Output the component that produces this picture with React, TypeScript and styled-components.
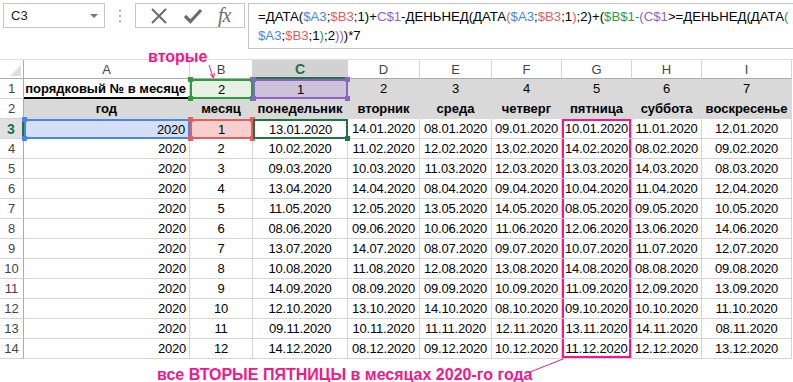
import React from 'react';
import styled, { createGlobalStyle } from 'styled-components';

const PINK = '#f5168a';
const GRID = '#d4d4d4';
const GREY_FILL = '#d9d9d9';

const GlobalStyle = createGlobalStyle`
    body {
        margin: 0;
        background: #fff;
        font-family: "Liberation Sans", Arial, sans-serif;
        overflow: hidden;
    }
`

/**
 * PAGE
 */

const Page = styled.div`
    position: relative;
    width: 793px;
    height: 382px;
    overflow: hidden;
    background: #fff;
`

/**
 * FORMULA BAR
 */

const FormulaBar = styled.div`
    display: flex;
    align-items: flex-start;
    height: 59px;
    padding: 3px 0 0 3px;
    box-sizing: border-box;
`

const NameBox = styled.div`
    width: 102px;
    height: 25px;
    box-sizing: border-box;
    border: 1px solid #c6c6c6;
    display: flex;
    align-items: center;
    justify-content: space-between;
    padding: 0 6px 0 7px;
    font-size: 13px;
    color: #222;
`

const DropArrow = styled.span`
    width: 0;
    height: 0;
    border-left: 4px solid transparent;
    border-right: 4px solid transparent;
    border-top: 4px solid #777;
`

const Grip = styled.div`
    width: 30px;
    height: 25px;
    display: flex;
    flex-direction: column;
    align-items: center;
    justify-content: center;
    gap: 3px;
    & span {
        width: 2px;
        height: 2px;
        background: #b5b5b5;
    }
`

const ButtonsBox = styled.div`
    width: 110px;
    height: 25px;
    box-sizing: border-box;
    border: 1px solid #c6c6c6;
    display: flex;
    align-items: center;
    justify-content: space-around;
    padding: 0 6px;
`

const FxLabel = styled.span`
    font-family: "Liberation Serif", "Times New Roman", serif;
    font-style: italic;
    font-size: 20px;
    color: #6e6e6e;
    letter-spacing: -1px;
`

const FormulaBox = styled.div`
    margin-left: 3px;
    flex: 1;
    height: 46px;
    box-sizing: border-box;
    border: 1px solid #c6c6c6;
    border-right: none;
    padding: 3px 0 0 9px;
    font-size: 13.2px;
    line-height: 19px;
    white-space: nowrap;
    color: #000;
`

const Tok = styled.span<{ $c: string }>`
    color: ${p => p.$c};
`

/**
 * SHEET
 */

const COLS = [24, 166, 63, 95, 72, 72, 70, 70, 70, 90];

const Sheet = styled.div`
    display: grid;
    grid-template-columns: ${COLS.map(c => c + 'px').join(' ')};
    grid-template-rows: 19px repeat(14, 20px);
    border-top: 1px solid #e1e1e1;
    font-size: 13px;
    color: #000;
`

const Corner = styled.div`
    position: relative;
    border-right: 1px solid #ababab;
    border-bottom: 1px solid #ababab;
    &:after {
        content: '';
        position: absolute;
        right: 2px;
        bottom: 2px;
        border-left: 11px solid transparent;
        border-bottom: 11px solid #dfdfdf;
    }
`

const ColHead = styled.div<{ $active?: boolean }>`
    box-sizing: border-box;
    display: flex;
    align-items: center;
    justify-content: center;
    background: ${p => p.$active ? '#d2d2d2' : '#fff'};
    border-right: 1px solid ${GRID};
    border-bottom: ${p => p.$active ? '2px solid #217346' : '1px solid #ababab'};
    color: ${p => p.$active ? '#217346' : '#444'};
    font-weight: ${p => p.$active ? 700 : 400};
    font-size: ${p => p.$active ? '14px' : '13px'};
`

const RowHead = styled.div<{ $active?: boolean }>`
    box-sizing: border-box;
    display: flex;
    align-items: center;
    justify-content: center;
    background: ${p => p.$active ? '#e1e1e1' : '#fff'};
    border-right: ${p => p.$active ? '2px solid #217346' : '1px solid #ababab'};
    border-bottom: 1px solid ${GRID};
    color: ${p => p.$active ? '#217346' : '#444'};
    font-weight: ${p => p.$active ? 700 : 400};
    font-size: ${p => p.$active ? '14px' : '13px'};
`

type Align = 'left' | 'center' | 'right';
type Frame = 'top' | 'mid' | 'bottom';

const justify = (a?: Align) => a === 'right' ? 'flex-end' : a === 'left' ? 'flex-start' : 'center';

const frameShadow = (f?: Frame) => {
    if (!f) return 'none';
    const sides = [`inset 2px 0 0 ${PINK}`, `inset -2px 0 0 ${PINK}`];
    if (f === 'top') sides.push(`inset 0 2px 0 ${PINK}`);
    if (f === 'bottom') sides.push(`inset 0 -2px 0 ${PINK}`);
    return sides.join(', ');
}

const Cell = styled.div<{ $align?: Align; $bold?: boolean; $fill?: string; $underline?: boolean; $frame?: Frame }>`
    box-sizing: border-box;
    display: flex;
    align-items: center;
    justify-content: ${p => justify(p.$align)};
    padding: 0 3px;
    white-space: nowrap;
    overflow: hidden;
    letter-spacing: ${p => p.$bold ? '0' : '-0.2px'};
    background: ${p => p.$fill || '#fff'};
    border-right: 1px solid ${p => p.$fill || GRID};
    border-bottom: ${p => p.$underline ? '2px solid #000' : `1px solid ${p.$fill || GRID}`};
    font-weight: ${p => p.$bold ? 700 : 400};
    box-shadow: ${p => frameShadow(p.$frame)};
`

const RefCell = styled.div<{ $color: string; $fill?: string; $align?: Align }>`
    position: relative;
    box-sizing: border-box;
    display: flex;
    align-items: center;
    justify-content: ${p => justify(p.$align)};
    padding: 0 3px;
    letter-spacing: -0.2px;
    background: ${p => p.$fill || '#fff'};
    border: 2px solid ${p => p.$color};
    z-index: 2;
`

const Handle = styled.span<{ $color: string; $pos: 'tl' | 'tr' | 'bl' | 'br' }>`
    position: absolute;
    width: 5px;
    height: 5px;
    background: ${p => p.$color};
    ${p => p.$pos[0] === 't' ? 'top: -4px;' : 'bottom: -4px;'}
    ${p => p.$pos[1] === 'l' ? 'left: -4px;' : 'right: -4px;'}
`

/**
 * ANNOTATIONS
 */

const Caption = styled.div`
    padding: 6px 0 0 157px;
    font-size: 16px;
    line-height: 20px;
    font-weight: 700;
    color: ${PINK};
    white-space: nowrap;
`

const Label = styled.div`
    position: absolute;
    left: 148px;
    top: 47px;
    font-size: 16px;
    line-height: 20px;
    font-weight: 700;
    color: ${PINK};
`

const Overlay = styled.svg`
    position: absolute;
    left: 0;
    top: 0;
    pointer-events: none;
    z-index: 5;
`

function Handles({ color, corners = ['tl', 'tr', 'bl', 'br'] }: { color: string; corners?: ('tl' | 'tr' | 'bl' | 'br')[] }) {
    return (
        <>
            {corners.map(c => <Handle key={c} $color={color} $pos={c} />)}
        </>
    )
}

const C_BLUE = '#4a86e8';
const C_RED = '#e06060';
const C_PURPLE = '#8e63c9';
const C_GREEN = '#2f9a44';

const DAYS = ['понедельник', 'вторник', 'среда', 'четверг', 'пятница', 'суббота', 'воскресенье'];
const LETTERS = ['A', 'B', 'C', 'D', 'E', 'F', 'G', 'H', 'I'];
const FRIDAY = 4;

// second occurrence of weekday (1 = Mon .. 7 = Sun) in a month of 2020
function secondWeekday(month: number, wd: number) {
    const d8 = new Date(2020, month - 1, 8).getDay() || 7;
    const day = 8 + ((wd - d8 + 7) % 7);
    const pad = (n: number) => (n < 10 ? '0' : '') + n;
    return `${pad(day)}.${pad(month)}.2020`;
}

function Formula() {
    return (
        <FormulaBox>
            <div>
                =ДАТА(<Tok $c={C_BLUE}>$A3</Tok>;<Tok $c={C_RED}>$B3</Tok>;1)+<Tok $c={C_PURPLE}>C$1</Tok>-ДЕНЬНЕД(ДАТА<Tok $c={C_RED}>(</Tok><Tok $c={C_BLUE}>$A3</Tok>;<Tok $c={C_RED}>$B3</Tok>;1<Tok $c={C_RED}>)</Tok>;2)+(<Tok $c={C_GREEN}>$B$1</Tok><Tok $c={C_GREEN}>-</Tok><Tok $c={C_PURPLE}>(C$1</Tok>&gt;=ДЕНЬНЕД(ДАТА<Tok $c={C_GREEN}>(</Tok>
            </div>
            <div>
                <Tok $c={C_BLUE}>$A3</Tok>;<Tok $c={C_RED}>$B3</Tok>;1<Tok $c={C_GREEN}>)</Tok>;2<Tok $c={C_PURPLE}>)</Tok><Tok $c={C_PURPLE}>)</Tok>)*7
            </div>
        </FormulaBox>
    )
}

export default function App() {
    const months = Array.from({ length: 12 }, (_, i) => i + 1);
    return (
        <Page>
            <GlobalStyle />
            <FormulaBar>
                <NameBox>C3<DropArrow /></NameBox>
                <Grip><span /><span /><span /></Grip>
                <ButtonsBox>
                    <svg width="18" height="16" viewBox="0 0 18 16">
                        <path d="M2 1 L16 15 M16 1 L2 15" stroke="#6b6b6b" strokeWidth="2" fill="none" />
                    </svg>
                    <svg width="20" height="16" viewBox="0 0 20 16">
                        <path d="M2 8 L7.5 13.5 L18 2" stroke="#6b6b6b" strokeWidth="3.2" fill="none" />
                    </svg>
                    <FxLabel>fx</FxLabel>
                </ButtonsBox>
                <Formula />
            </FormulaBar>

            <Sheet>
                <Corner />
                {LETTERS.map(l => <ColHead key={l} $active={l === 'C'}>{l}</ColHead>)}

                <RowHead>1</RowHead>
                <Cell $bold $align="right" $underline>порядковый № в месяце</Cell>
                <RefCell $color={C_GREEN} $fill="#e7f1e4">2<Handles color={C_GREEN} /></RefCell>
                <RefCell $color={C_PURPLE} $fill="#ccc3da">1<Handles color={C_PURPLE} /></RefCell>
                {[2, 3, 4, 5, 6, 7].map(n => <Cell key={n} $fill={GREY_FILL}>{n}</Cell>)}

                <RowHead>2</RowHead>
                <Cell $bold $fill={GREY_FILL}>год</Cell>
                <Cell $bold $fill={GREY_FILL}>месяц</Cell>
                {DAYS.map(d => <Cell key={d} $bold $fill={GREY_FILL}>{d}</Cell>)}

                {months.map(m => {
                    const first = m === 1;
                    const frame: Frame = m === 1 ? 'top' : m === 12 ? 'bottom' : 'mid';
                    return (
                        <React.Fragment key={m}>
                            <RowHead $active={first}>{m + 2}</RowHead>
                            {first ? (
                                <RefCell $color={C_BLUE} $fill="#d5e0f6" $align="right">2020<Handles color={C_BLUE} corners={['tl', 'bl']} /></RefCell>
                            ) : (
                                <Cell $align="right">2020</Cell>
                            )}
                            {first ? (
                                <RefCell $color={C_RED} $fill="#f7cfcf">1<Handles color={C_RED} /></RefCell>
                            ) : (
                                <Cell>{m}</Cell>
                            )}
                            {DAYS.map((d, i) => first && i === 0 ? (
                                <RefCell key={d} $color="#217346">{secondWeekday(m, i + 1)}<Handles color="#217346" corners={['br']} /></RefCell>
                            ) : (
                                <Cell key={d} $frame={i === FRIDAY ? frame : undefined}>{secondWeekday(m, i + 1)}</Cell>
                            ))}
                        </React.Fragment>
                    )
                })}
            </Sheet>

            <Caption>все ВТОРЫЕ ПЯТНИЦЫ в месяцах 2020-го года</Caption>
            <Label>вторые</Label>

            <Overlay width="793" height="382" viewBox="0 0 793 382">
                <line x1="209" y1="65" x2="213" y2="77" stroke={PINK} strokeWidth="1" />
                <path d="M210 74 L213.5 78 L214.5 72.8" stroke={PINK} strokeWidth="1" fill="none" />
                <line x1="530" y1="372" x2="563" y2="359" stroke={PINK} strokeWidth="1" />
            </Overlay>
        </Page>
    )
}
